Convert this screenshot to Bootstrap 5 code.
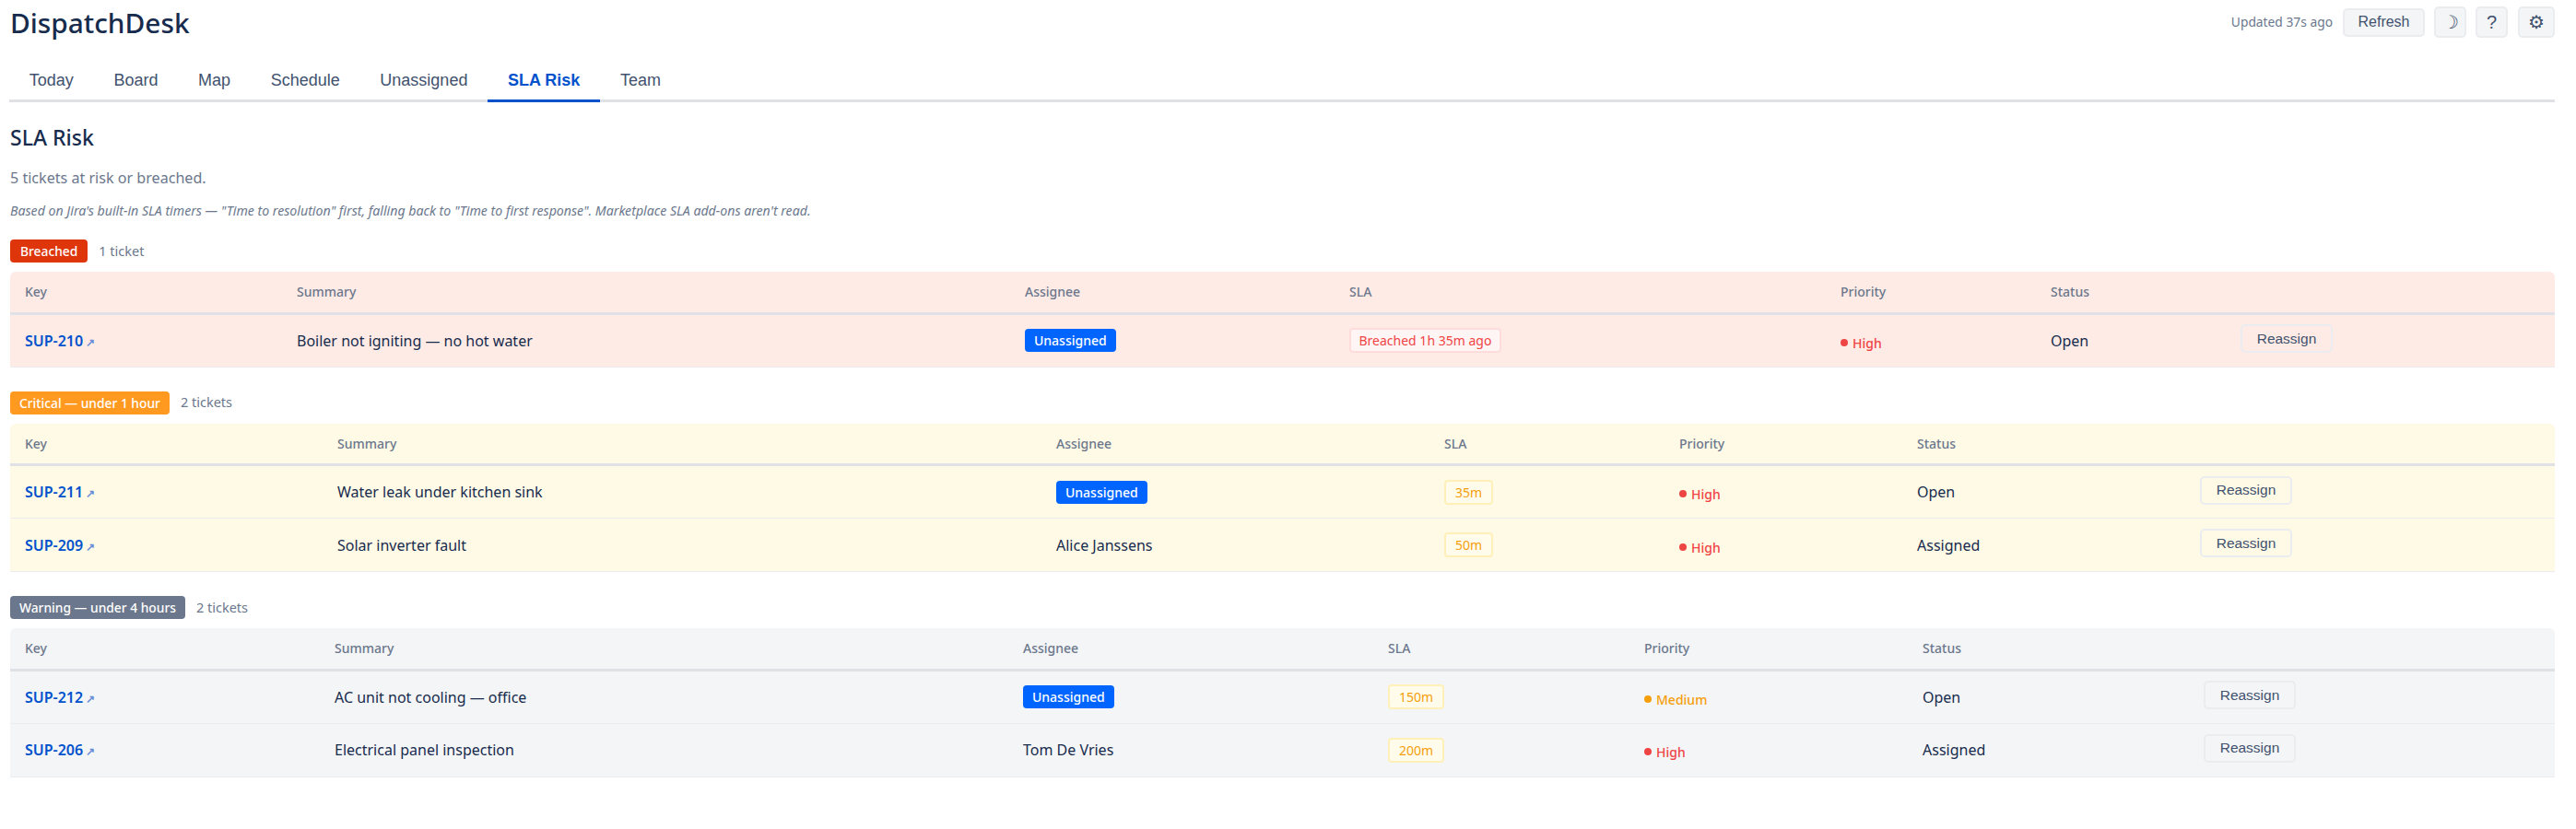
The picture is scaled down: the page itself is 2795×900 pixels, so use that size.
<!DOCTYPE html>
<html lang="en"><head><meta charset="utf-8"><title>DispatchDesk</title>
<link href="https://cdn.jsdelivr.net/npm/bootstrap@5.3.0/dist/css/bootstrap.min.css" rel="stylesheet">
<style>
body{font-family:"Noto Sans",sans-serif;color:#172b4d;background:#fff;font-size:16px}
.page-wrap{padding:0 23px 0 11px}
.top-bar{height:62px;padding-top:7px}
.brand-name{font-size:29.8px;font-weight:500;margin:-4px 0 0;line-height:44px;color:#172b4d}
.updated{font-size:13.8px;color:#6b778c;margin-right:1px}
.tool-btn{font-family:"Liberation Sans",sans-serif;background:#f4f5f7;border:2px solid #ebecf0;border-radius:5px;color:#42526e;font-size:16px;line-height:1;padding:0;display:inline-flex;align-items:center;justify-content:center}
.tool-btn:hover{background:#ebecf0;border-color:#dfe1e6;color:#42526e}
.btn-refresh{width:89px;height:31px}
.btn-square{width:35px;height:34px;font-size:20px}
.btn-gear{width:40px;margin-left:1px}
.tab-strip{border-bottom:3px solid #dfe1e6;height:49px;margin-left:-1px}
.tab-strip .nav-link{font-family:"Liberation Sans",sans-serif;font-size:18px;color:#42526e;padding:0 21.8px;height:49px;line-height:50px;border-bottom:3px solid transparent;margin-bottom:-3px;border-radius:0}
.tab-strip .nav-link.active{color:#0052cc;font-weight:700;border-bottom-color:#0052cc}
.view-title{font-size:23px;font-weight:500;line-height:32px;margin:22px 0 0;color:#172b4d}
.view-count{color:#6b778c;font-size:16.1px;line-height:24px;margin:16px 0 0}
.view-note{color:#6b778c;font-size:14.15px;font-style:italic;line-height:20px;margin:14px 0 21px}
.group-head{display:flex;align-items:center;gap:12px;height:25px;margin-bottom:10px}
.group-tag{color:#fff;font-size:13.8px;font-weight:500;border-radius:4px;padding:0 10px;line-height:25px;height:25px}
.tag-red{background:#de350b;padding:0 11px}.tag-orange{background:#ff991f}.tag-grey{background:#6b778c}
.group-count{color:#6b778c;font-size:14.5px}
.sla-group{margin-bottom:26px}
.sla-table{--bs-table-bg:transparent;--bs-table-color:#172b4d;margin:0;border-radius:6px 6px 0 0;overflow:hidden;font-size:16px;table-layout:fixed}
.bg-breach{background:#ffebe6}.bg-crit{background:#fffae6}.bg-warn{background:#f4f5f7}
.sla-table th{font-size:14px;font-weight:500;color:#6b778c;padding:0 16px;height:45px;vertical-align:middle;border-bottom:3px solid #dfe1e6}
.sla-table td{padding:0 16px;height:58px;vertical-align:middle;border-bottom:1px solid #ebecf0}
.sla-table>:not(caption)>*>*{background:transparent;box-shadow:none}
.sla-table>:not(:first-child){border-top:0}
.ticket-key{color:#0052cc;font-weight:600;text-decoration:none}
.key-arrow{color:#6b8fd6;font-size:12px;margin-left:3px}
.assignee-tag{background:#0065ff;color:#fff;font-size:14px;font-weight:500;border-radius:4px;padding:0 10px;line-height:25px;display:inline-block}
.sla-chip{display:inline-block;font-size:14px;border-radius:4px;padding:0 9px;line-height:23px;border-width:2px;border-style:solid}
.chip-red{color:#ef4444;background:#fff5f5;border-color:#fedcdc;padding:0 8.5px}
.chip-amber{color:#f59e0b;background:#fffcec;border-color:#fef0b8;padding:0 10px}
.prio{font-size:14px;font-weight:500;position:relative;top:2px;white-space:nowrap}
.prio-dot{display:inline-block;width:8px;height:8px;border-radius:50%;background:currentColor;margin-right:5px;position:relative;top:-2px}
.prio-high{color:#ef4444}.prio-med{color:#f59e0b}
.btn-reassign{font-family:"Liberation Sans",sans-serif;background:transparent;border:2px solid #ebecf0;border-radius:5px;color:#42526e;font-size:15.5px;width:100px;height:31px;padding:0;line-height:1;position:relative;top:-2px}
.btn-reassign:hover{background:#ebecf0;color:#42526e;border-color:#dfe1e6}
.b1{width:295px}.b2{width:790px}.b3{width:352px}.b4{width:533px}.b5{width:228px}.b6{width:206px}.b7{width:357px}
.c1{width:339px}.c2{width:780px}.c3{width:421px}.c4{width:255px}.c5{width:258px}.c6{width:307px}.c7{width:401px}
.w1{width:336px}.w2{width:747px}.w3{width:396px}.w4{width:278px}.w5{width:302px}.w6{width:305px}.w7{width:397px}
</style></head>
<body>
<div class="page-wrap">
  <header class="top-bar d-flex justify-content-between align-items-start">
    <h1 class="brand-name">DispatchDesk</h1>
    <div class="d-flex align-items-center" style="gap:10px">
      <span class="updated">Updated 37s ago</span>
      <button class="btn tool-btn btn-refresh">Refresh</button>
      <button class="btn tool-btn btn-square">☽</button>
      <button class="btn tool-btn btn-square">?</button>
      <button class="btn tool-btn btn-square btn-gear">⚙</button>
    </div>
  </header>
  <ul class="nav tab-strip">
    <li class="nav-item"><a class="nav-link" href="#">Today</a></li>
    <li class="nav-item"><a class="nav-link" href="#">Board</a></li>
    <li class="nav-item"><a class="nav-link" href="#">Map</a></li>
    <li class="nav-item"><a class="nav-link" href="#">Schedule</a></li>
    <li class="nav-item"><a class="nav-link" href="#">Unassigned</a></li>
    <li class="nav-item"><a class="nav-link active" href="#">SLA Risk</a></li>
    <li class="nav-item"><a class="nav-link" href="#">Team</a></li>
  </ul>
  <h2 class="view-title">SLA Risk</h2>
  <p class="view-count">5 tickets at risk or breached.</p>
  <p class="view-note">Based on Jira's built-in SLA timers — "Time to resolution" first, falling back to "Time to first response". Marketplace SLA add-ons aren't read.</p>

  <section class="sla-group">
    <div class="group-head"><span class="group-tag tag-red">Breached</span><span class="group-count">1 ticket</span></div>
    <table class="table sla-table bg-breach">
      <colgroup><col class="b1"><col class="b2"><col class="b3"><col class="b4"><col class="b5"><col class="b6"><col class="b7"></colgroup>
      <thead><tr><th>Key</th><th>Summary</th><th>Assignee</th><th>SLA</th><th>Priority</th><th>Status</th><th></th></tr></thead>
      <tbody>
        <tr><td><a class="ticket-key" href="#">SUP-210<span class="key-arrow">↗</span></a></td><td>Boiler not igniting — no hot water</td><td><span class="assignee-tag">Unassigned</span></td><td><span class="sla-chip chip-red">Breached 1h 35m ago</span></td><td><span class="prio prio-high"><span class="prio-dot"></span>High</span></td><td>Open</td><td><button class="btn btn-reassign">Reassign</button></td></tr>
      </tbody>
    </table>
  </section>

  <section class="sla-group">
    <div class="group-head"><span class="group-tag tag-orange">Critical — under 1 hour</span><span class="group-count">2 tickets</span></div>
    <table class="table sla-table bg-crit">
      <colgroup><col class="c1"><col class="c2"><col class="c3"><col class="c4"><col class="c5"><col class="c6"><col class="c7"></colgroup>
      <thead><tr><th>Key</th><th>Summary</th><th>Assignee</th><th>SLA</th><th>Priority</th><th>Status</th><th></th></tr></thead>
      <tbody>
        <tr><td><a class="ticket-key" href="#">SUP-211<span class="key-arrow">↗</span></a></td><td>Water leak under kitchen sink</td><td><span class="assignee-tag">Unassigned</span></td><td><span class="sla-chip chip-amber">35m</span></td><td><span class="prio prio-high"><span class="prio-dot"></span>High</span></td><td>Open</td><td><button class="btn btn-reassign">Reassign</button></td></tr>
        <tr><td><a class="ticket-key" href="#">SUP-209<span class="key-arrow">↗</span></a></td><td>Solar inverter fault</td><td>Alice Janssens</td><td><span class="sla-chip chip-amber">50m</span></td><td><span class="prio prio-high"><span class="prio-dot"></span>High</span></td><td>Assigned</td><td><button class="btn btn-reassign">Reassign</button></td></tr>
      </tbody>
    </table>
  </section>

  <section class="sla-group">
    <div class="group-head"><span class="group-tag tag-grey">Warning — under 4 hours</span><span class="group-count">2 tickets</span></div>
    <table class="table sla-table bg-warn">
      <colgroup><col class="w1"><col class="w2"><col class="w3"><col class="w4"><col class="w5"><col class="w6"><col class="w7"></colgroup>
      <thead><tr><th>Key</th><th>Summary</th><th>Assignee</th><th>SLA</th><th>Priority</th><th>Status</th><th></th></tr></thead>
      <tbody>
        <tr><td><a class="ticket-key" href="#">SUP-212<span class="key-arrow">↗</span></a></td><td>AC unit not cooling — office</td><td><span class="assignee-tag">Unassigned</span></td><td><span class="sla-chip chip-amber">150m</span></td><td><span class="prio prio-med"><span class="prio-dot"></span>Medium</span></td><td>Open</td><td><button class="btn btn-reassign">Reassign</button></td></tr>
        <tr><td><a class="ticket-key" href="#">SUP-206<span class="key-arrow">↗</span></a></td><td>Electrical panel inspection</td><td>Tom De Vries</td><td><span class="sla-chip chip-amber">200m</span></td><td><span class="prio prio-high"><span class="prio-dot"></span>High</span></td><td>Assigned</td><td><button class="btn btn-reassign">Reassign</button></td></tr>
      </tbody>
    </table>
  </section>
</div>
<script src="https://cdn.jsdelivr.net/npm/bootstrap@5.3.0/dist/js/bootstrap.bundle.min.js"></script>
</body></html>
